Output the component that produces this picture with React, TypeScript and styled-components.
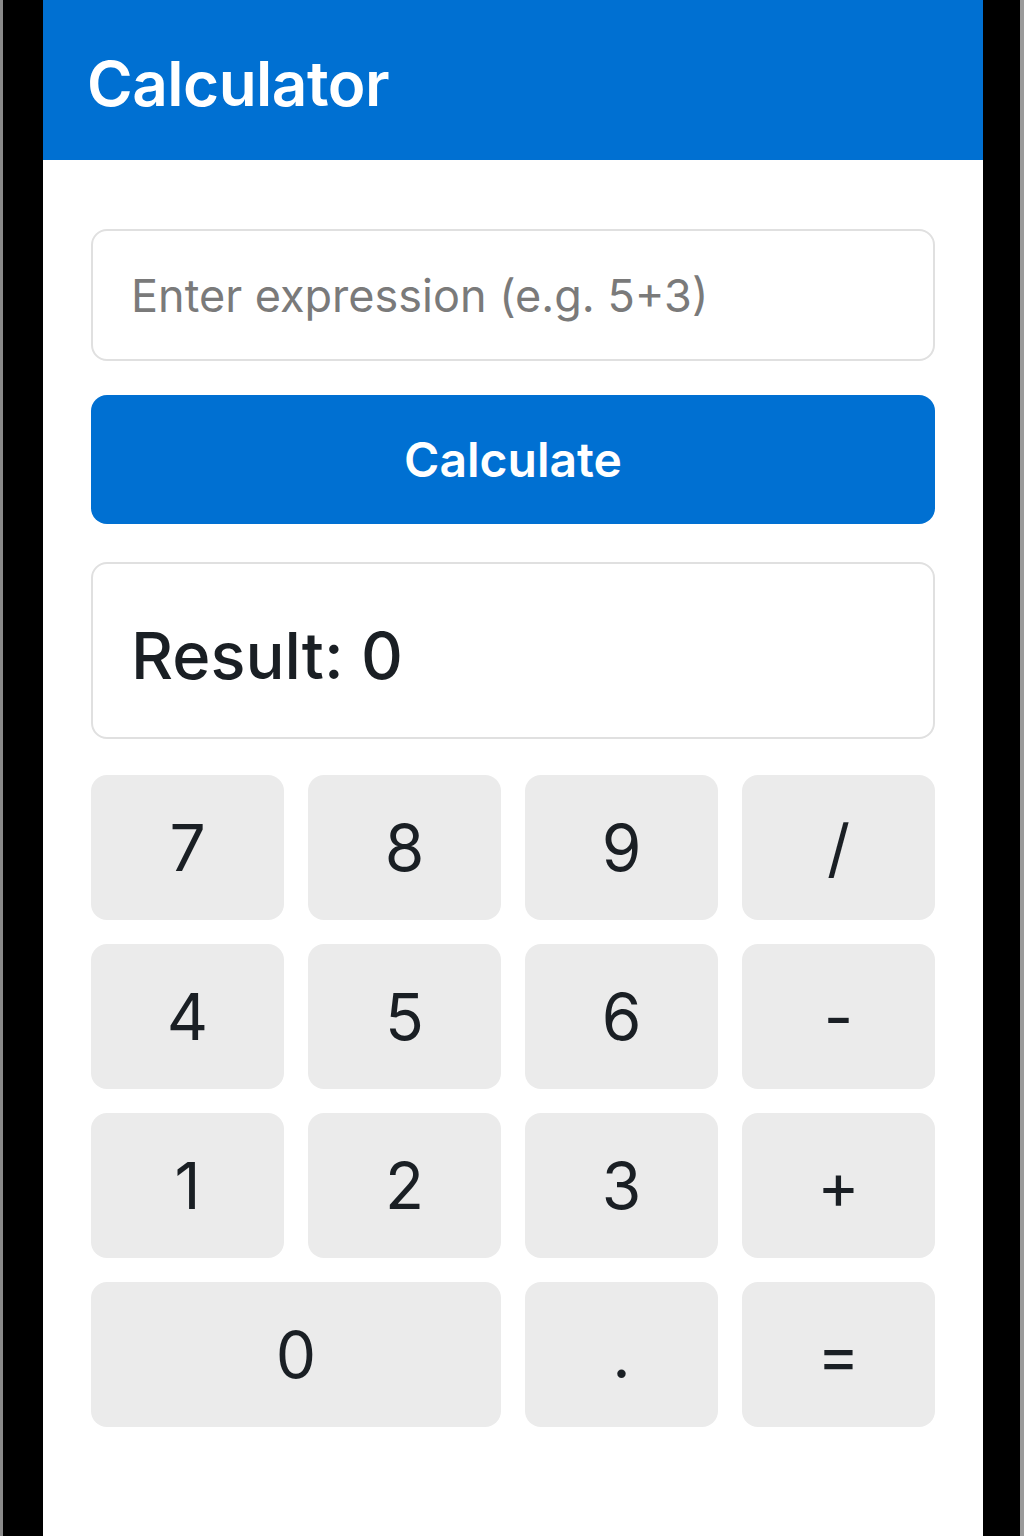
import React, { useState } from "react";
import styled, { createGlobalStyle } from "styled-components";

const GlobalStyle = createGlobalStyle`
  html, body {
    margin: 0;
    padding: 0;
    background: #000;
  }
  * {
    box-sizing: border-box;
  }
`;

const Frame = styled.div`
  min-height: 1536px;
  background: #000;
  border-left: 3px solid #8a8a8a;
  border-right: 4px solid #9a9a9a;
  padding: 0 37px 0 40px;
  display: flex;
  font-family: Inter, "Noto Sans", sans-serif;
`;

const Screen = styled.div`
  flex: 1;
  background: #fff;
  display: flex;
  flex-direction: column;
`;

const Header = styled.header`
  height: 160px;
  background: #0070d2;
  display: flex;
  align-items: center;
  padding: 6px 0 0 44px;
`;

const Title = styled.h1`
  margin: 0;
  color: #fff;
  font-size: 62px;
  font-weight: 600;
  letter-spacing: -0.5px;
`;

const Body = styled.main`
  padding: 69px 48px 0 48px;
  display: flex;
  flex-direction: column;
`;

const ExpressionInput = styled.input`
  height: 132px;
  border: 2px solid #e0e0e0;
  border-radius: 16px;
  padding: 0 38px;
  font-family: inherit;
  font-size: 45px;
  color: #1a1f24;
  outline: none;

  &::placeholder {
    color: #7a7a7a;
  }
`;

const CalcButton = styled.button`
  margin-top: 34px;
  height: 129px;
  border: none;
  border-radius: 16px;
  background: #0070d2;
  color: #fff;
  font-family: inherit;
  font-size: 48px;
  font-weight: 600;
  cursor: pointer;
`;

const ResultBox = styled.div`
  margin-top: 38px;
  height: 177px;
  border: 2px solid #e0e0e0;
  border-radius: 16px;
  padding: 10px 38px 0;
  display: flex;
  align-items: center;
  font-size: 65px;
  font-weight: 500;
  color: #1a1f24;
`;

const Keypad = styled.div`
  margin-top: 36px;
  display: grid;
  grid-template-columns: repeat(4, 1fr);
  grid-auto-rows: 145px;
  gap: 24px;
`;

const Key = styled.button<{ $wide?: boolean }>`
  grid-column: ${(p) => (p.$wide ? "span 2" : "span 1")};
  border: none;
  border-radius: 16px;
  background: #ebebeb;
  color: #1a1f24;
  font-family: inherit;
  font-size: 64px;
  font-weight: 400;
  cursor: pointer;
  display: flex;
  align-items: center;
  justify-content: center;
`;

const keys: { label: string; wide?: boolean }[] = [
  { label: "7" },
  { label: "8" },
  { label: "9" },
  { label: "/" },
  { label: "4" },
  { label: "5" },
  { label: "6" },
  { label: "-" },
  { label: "1" },
  { label: "2" },
  { label: "3" },
  { label: "+" },
  { label: "0", wide: true },
  { label: "." },
  { label: "=" },
];

export default function App() {
  const [expr, setExpr] = useState("");
  const [result, setResult] = useState("0");

  const calculate = () => {
    try {
      if (!/^[\d+\-*/. ()]*$/.test(expr) || expr.trim() === "") return;
      // eslint-disable-next-line no-new-func
      const value = Function(`return (${expr})`)();
      setResult(String(value));
    } catch {
      setResult("Error");
    }
  };

  const press = (label: string) => {
    if (label === "=") {
      calculate();
      return;
    }
    setExpr((e) => e + label);
  };

  return (
    <>
      <GlobalStyle />
      <Frame>
        <Screen>
          <Header>
            <Title>Calculator</Title>
          </Header>
          <Body>
            <ExpressionInput
              value={expr}
              placeholder="Enter expression (e.g. 5+3)"
              onChange={(e) => setExpr(e.target.value)}
            />
            <CalcButton onClick={calculate}>Calculate</CalcButton>
            <ResultBox>Result: {result}</ResultBox>
            <Keypad>
              {keys.map((k) => (
                <Key key={k.label} $wide={k.wide} onClick={() => press(k.label)}>
                  {k.label}
                </Key>
              ))}
            </Keypad>
          </Body>
        </Screen>
      </Frame>
    </>
  );
}
